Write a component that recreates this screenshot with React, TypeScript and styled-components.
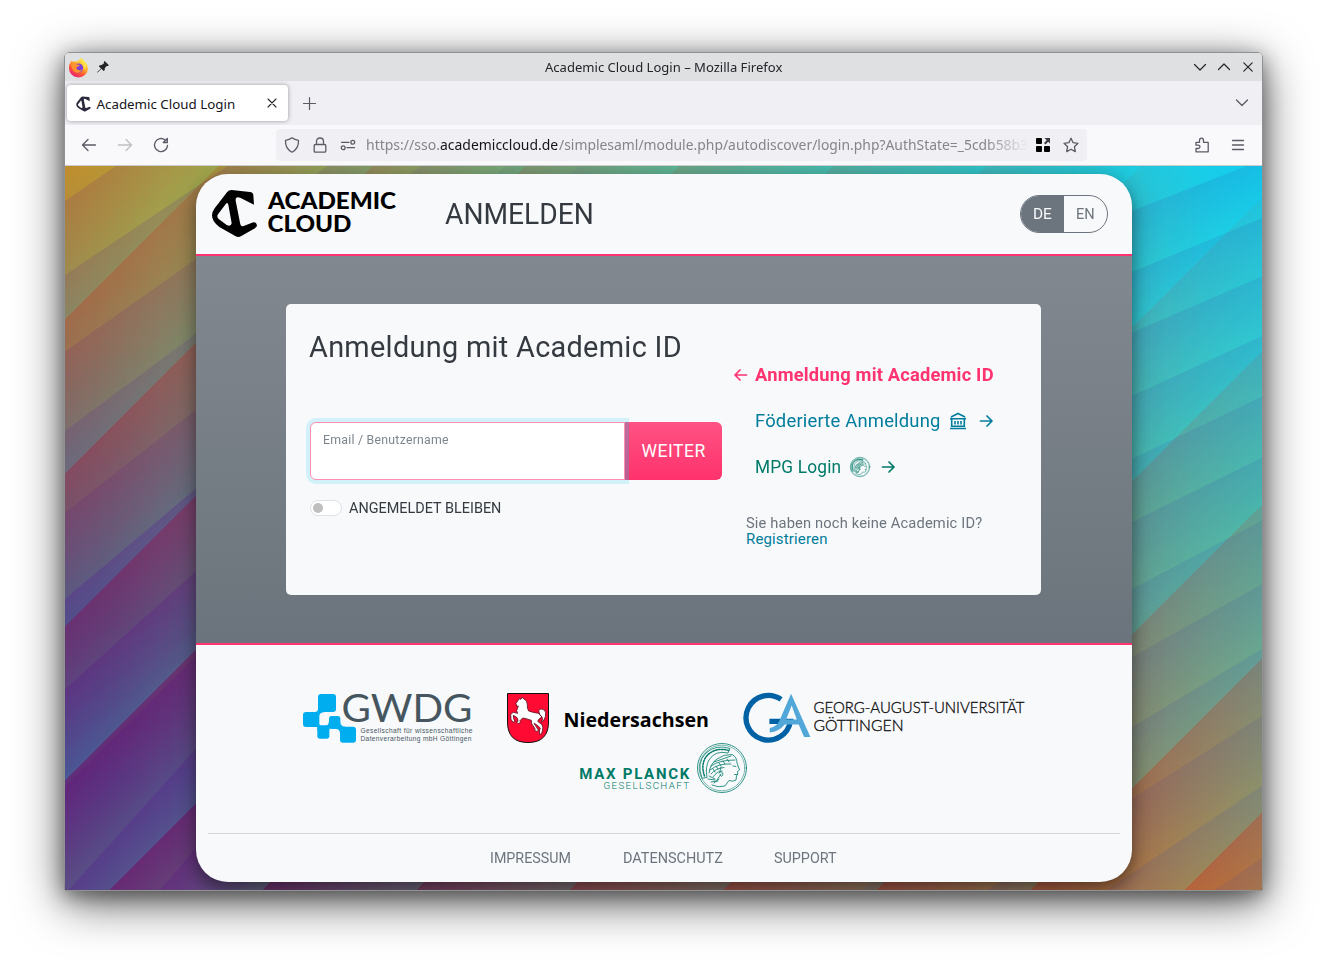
import React, { useLayoutEffect, useRef, useState } from "react";
import styled, { createGlobalStyle } from "styled-components";

const UI = `"Noto Sans", "Open Sans", sans-serif`;
const SITE = `Roboto, "Liberation Sans", sans-serif`;
const PINK = "#ff3370";
const TEAL = "#007d9c";
const GREEN = "#007a68";
const GREY = "#6c757d";
const INK = "#343a40";

const Global = createGlobalStyle`
  * { box-sizing: border-box; }
  body { margin: 0; background: #fff; font-family: ${SITE}; }
  svg { display: block; flex: none; overflow: visible; }
`;

/* A single line of text condensed or widened to a fixed measure. */
const Measure = styled.span`
  display: inline-block;
  flex: none;
  white-space: nowrap;
  text-align: left;
`;
const Stretch = styled.span`
  display: inline-block;
  transform-origin: 0 50%;
`;
function Fit({ w, children }: { w: number; children: React.ReactNode }) {
  const ref = useRef<HTMLSpanElement>(null);
  const [k, setK] = useState(1);
  useLayoutEffect(() => {
    if (ref.current) setK(w / ref.current.offsetWidth);
  }, [w]);
  return (
    <Measure style={{ width: w }}>
      <Stretch ref={ref} style={{ transform: `scaleX(${k})` }}>{children}</Stretch>
    </Measure>
  );
}

/* ---------- window frame ---------- */
const Desktop = styled.div`
  width: 1327px;
  height: 967px;
  padding: 52px 64px 76px;
  overflow: hidden;
  background: #fff;
`;
const Window = styled.div`
  width: 1199px;
  height: 839px;
  border: 1px solid #8f9193;
  border-radius: 5px 5px 0 0;
  overflow: hidden;
  display: flex;
  flex-direction: column;
  box-shadow: 0 12px 48px rgba(0, 0, 0, 0.62), 0 5px 20px rgba(0, 0, 0, 0.42);
`;
const TitleBar = styled.div`
  height: 28px;
  flex: none;
  display: grid;
  grid-template-columns: 1fr auto 1fr;
  align-items: center;
  background: #dee0e2;
  color: #232629;
  font: 13.33px/20px ${UI};
`;
const TitleLeft = styled.div`
  display: flex;
  align-items: center;
  gap: 7px;
  padding-left: 3px;
`;
const TitleRight = styled.div`
  display: flex;
  justify-content: flex-end;
  gap: 8px;
  padding-right: 6px;
`;
const TabStrip = styled.div`
  height: 44px;
  flex: none;
  display: flex;
  align-items: center;
  padding: 0 12px 0 2px;
  background: #f0eff4;
`;
const Tab = styled.div`
  width: 221px;
  height: 36px;
  margin-right: 13px;
  padding: 2px 8px 0 9px;
  display: flex;
  align-items: center;
  border-radius: 4px;
  background: #fff;
  box-shadow: 0 0 4px rgba(60, 60, 70, 0.5);
  color: #15141a;
  font: 13.33px/20px ${UI};
`;
const TabLabel = styled.div`
  flex: 1;
  padding-left: 5.5px;
`;
const Push = styled.div`
  flex: 1;
`;
const Toolbar = styled.div`
  height: 41px;
  flex: none;
  display: flex;
  align-items: center;
  padding: 0 16px;
  border-bottom: 1px solid #cccccf;
  background: #f9f9fb;
`;
const NavButtons = styled.div`
  width: 195px;
  display: flex;
  gap: 20px;
`;
const UrlBar = styled.div`
  width: 811px;
  height: 32px;
  padding: 0 8px;
  display: flex;
  align-items: center;
  border-radius: 4px;
  background: #f0f0f4;
`;
const UrlIcons = styled.div`
  display: flex;
  gap: 12px;
`;
const Url = styled.div`
  width: 663px;
  margin-left: 10px;
  margin-right: 6px;
  overflow: hidden;
  white-space: nowrap;
  color: #84848b;
  font: 14px/22px ${UI};
  mask-image: linear-gradient(to right, #000 0, #000 618px, transparent 663px);
`;
const Domain = styled.span`
  color: #15141a;
`;

/* ---------- page ---------- */
const Viewport = styled.div`
  height: 724px;
  display: grid;
  grid-template: 1fr / 1fr;
  overflow: hidden;
  > * { grid-area: 1 / 1; }
`;
const Card = styled.div`
  z-index: 1;
  width: 936px;
  height: 708px;
  margin: 8px 0 0 131px;
  display: flex;
  flex-direction: column;
  border-radius: 32px;
  overflow: hidden;
  background: #f8f9fb;
  box-shadow: 0 8px 16px rgba(0, 0, 0, 0.4), 0 2px 34px rgba(0, 0, 0, 0.15);
`;
const Header = styled.header`
  height: 82px;
  flex: none;
  padding: 0 24px 0 16px;
  display: flex;
  align-items: center;
  border-bottom: 2px solid ${PINK};
`;
const PageTitle = styled.div`
  flex: 1;
  margin-left: 48px;
  color: ${INK};
  font-size: 29.5px;
  line-height: 40px;
`;
const LangSwitch = styled.div`
  width: 88px;
  height: 38px;
  display: flex;
  border: 1px solid ${GREY};
  border-radius: 19px;
  overflow: hidden;
`;
const Lang = styled.div<{ $on?: boolean }>`
  flex: 1;
  display: flex;
  align-items: center;
  justify-content: center;
  background: ${(p) => (p.$on ? GREY : "transparent")};
  color: ${(p) => (p.$on ? "#f8f9fb" : GREY)};
  font-size: 15px;
`;
const Main = styled.main`
  height: 389px;
  flex: none;
  padding: 48px 91px 48px 90px;
  border-bottom: 2px solid ${PINK};
  background: linear-gradient(#82888f, #6b747c);
`;
const LoginBox = styled.section`
  height: 291px;
  padding-left: 23px;
  display: flex;
  border-radius: 5px;
  background: #f8f9fb;
`;
const FormSide = styled.div`
  width: 413px;
  padding-top: 23px;
`;
const FormTitle = styled.div`
  height: 95px;
  color: ${INK};
  font-size: 29.5px;
  line-height: 40px;
  letter-spacing: 0.01em;
`;
const InputGroup = styled.div`
  height: 58px;
  margin-left: 1px;
  display: flex;
`;
const Field = styled.div`
  z-index: 1;
  width: 315px;
  padding: 8px 12px;
  border: 1px solid #ff8db0;
  border-radius: 6px 0 0 6px;
  background: #fff;
  box-shadow: 0 0 0 4px rgba(3, 194, 238, 0.15);
  color: #7d858c;
  font-size: 12.5px;
  line-height: 18px;
  letter-spacing: 0.02em;
`;
const Submit = styled.div`
  width: 97px;
  display: flex;
  align-items: center;
  justify-content: center;
  border-radius: 0 6px 6px 0;
  background: linear-gradient(#ff5284, #ff326c);
  box-shadow: inset 4px 0 0 rgba(150, 130, 170, 0.33);
  color: #fff;
  font-size: 17.5px;
  letter-spacing: 0.03em;
`;
const Remember = styled.div`
  margin: 18px 0 0 1px;
  display: flex;
  align-items: center;
  gap: 7px;
  color: ${INK};
  font-size: 15px;
  line-height: 20px;
`;
const Toggle = styled.div`
  width: 32px;
  height: 16px;
  padding: 2px;
  border: 1px solid #dee2e6;
  border-radius: 8px;
  background: #fff;
`;
const Knob = styled.div`
  width: 10px;
  height: 10px;
  border-radius: 50%;
  background: #bfbfbf;
`;
const MethodSide = styled.div`
  padding: 48px 0 0 11px;
`;
const Method = styled.div<{ $color: string; $active?: boolean }>`
  height: 46px;
  padding-left: ${(p) => (p.$active ? 0 : 22)}px;
  display: flex;
  align-items: center;
  color: ${(p) => p.$color};
  font-size: 17.8px;
  font-weight: ${(p) => (p.$active ? 700 : 400)};
  letter-spacing: 0.01em;
  ${Measure} { padding-bottom: 2px; }
`;
const Gap = styled.span<{ $w: number }>`
  width: ${(p) => p.$w}px;
`;
const SignUp = styled.div`
  margin: 25px 0 0 13px;
  color: ${GREY};
  font-size: 15px;
  line-height: 16px;
  letter-spacing: 0.01em;
`;
const SignUpLink = styled.div`
  color: ${TEAL};
`;
const Footer = styled.footer`
  padding: 48px 12px 0;
`;
const LogoRow = styled.div<{ $offset: number }>`
  height: 50px;
  padding-left: ${(p) => p.$offset}px;
  display: flex;
`;
const FooterLinks = styled.nav`
  height: 49px;
  margin-top: 40px;
  padding-right: 1px;
  display: flex;
  align-items: center;
  justify-content: center;
  gap: 52px;
  border-top: 1px solid #d3d6da;
  color: ${GREY};
  font-size: 14.8px;
`;

/* ---------- striped background ---------- */
const LEFT_EDGES = [
  [201, 111], [275, 187], [351.5, 259], [431, 333.5], [512.7, 409.7],
  [599, 488.5], [689, 571], [786.7, 656], [894, 748.6], [1004, 847.5], [1120, 950],
];
const RIGHT_EDGES = [
  [211, 160], [272, 218], [332.5, 276.4], [395.8, 336], [458.7, 396.4], [522, 457.6], [589, 520.5],
  [657, 584], [727, 649], [798.5, 716], [873, 785.7], [947, 857.7], [1023, 930],
];
type FanProps = { edges: number[][]; xa: number; xb: number; from: number; to: number; id: string; tint: string; alpha: (i: number) => number };
function Fan({ edges, xa, xb, from, to, id, tint, alpha }: FanProps) {
  const at = (e: number[], x: number) => e[0] + ((e[1] - e[0]) / (xb - xa)) * (x - xa);
  return (
    <g mask={`url(#${id}Mask)`}>
      {edges.slice(0, -1).map((e, i) => {
        const n = edges[i + 1];
        const m = (e[1] - e[0]) / (xb - xa);
        const xm = (xa + xb) / 2;
        const d = (at(n, xm) - at(e, xm)) / (1 + m * m);
        return (
          <g key={i}>
            <linearGradient id={`${id}${i}`} gradientUnits="userSpaceOnUse" x1={xm} y1={at(e, xm)} x2={xm - m * d} y2={at(e, xm) + d}>
              <stop offset="0" stopColor={tint} stopOpacity={alpha(i)} />
              <stop offset="1" stopColor={tint} stopOpacity="0" />
            </linearGradient>
            <polygon
              fill={`url(#${id}${i})`}
              points={`${from},${at(e, from)} ${to},${at(e, to)} ${to},${at(n, to)} ${from},${at(n, from)}`}
            />
          </g>
        );
      })}
    </g>
  );
}
const AREA = { x: 65, y: 166, width: 1197, height: 724 };
const Stripes = () => (
  <svg width="1197" height="724" viewBox="65 166 1197 724">
    <defs>
      <linearGradient id="baseL" gradientUnits="userSpaceOnUse" x1="40" y1="166" x2="90" y2="890">
        <stop offset="0" stopColor="#b8a838" />
        <stop offset="0.21" stopColor="#8e8e60" />
        <stop offset="0.42" stopColor="#6e727c" />
        <stop offset="0.63" stopColor="#545c8a" />
        <stop offset="0.85" stopColor="#4a5896" />
        <stop offset="1" stopColor="#565a8c" />
      </linearGradient>
      <linearGradient id="baseR" gradientUnits="userSpaceOnUse" x1="1262" y1="166" x2="1180" y2="890">
        <stop offset="0" stopColor="#12d2f0" />
        <stop offset="0.25" stopColor="#30cad2" />
        <stop offset="0.47" stopColor="#4cbaac" />
        <stop offset="0.68" stopColor="#6ca890" />
        <stop offset="0.88" stopColor="#90946a" />
        <stop offset="1" stopColor="#a88850" />
      </linearGradient>
      <linearGradient id="across" x1="0" x2="1" y1="0" y2="0">
        <stop offset="0.02" stopColor="#000" />
        <stop offset="0.95" stopColor="#fff" />
      </linearGradient>
      <linearGradient id="leftHalf" x1="0" x2="1" y1="0" y2="0">
        <stop offset="0.25" stopColor="#fff" />
        <stop offset="0.5" stopColor="#000" />
      </linearGradient>
      <linearGradient id="rightHalf" x1="0" x2="1" y1="0" y2="0">
        <stop offset="0.5" stopColor="#000" />
        <stop offset="0.75" stopColor="#fff" />
      </linearGradient>
      <mask id="toRight"><rect {...AREA} fill="url(#across)" /></mask>
      <mask id="flMask" maskUnits="userSpaceOnUse" {...AREA}><rect {...AREA} fill="url(#leftHalf)" /></mask>
      <mask id="frMask" maskUnits="userSpaceOnUse" {...AREA}><rect {...AREA} fill="url(#rightHalf)" /></mask>
      <linearGradient id="diagRed" gradientUnits="userSpaceOnUse" x1="192.3" y1="192.3" x2="269.1" y2="269.1" spreadMethod="repeat">
        <stop offset="0" stopColor="#e61400" stopOpacity="0.32" />
        <stop offset="1" stopColor="#e61400" stopOpacity="0" />
      </linearGradient>
      <linearGradient id="diagPlum" gradientUnits="userSpaceOnUse" x1="192.3" y1="192.3" x2="269.1" y2="269.1" spreadMethod="repeat">
        <stop offset="0" stopColor="#7c0058" stopOpacity="0.48" />
        <stop offset="1" stopColor="#7c0058" stopOpacity="0" />
      </linearGradient>
      <linearGradient id="fade" gradientUnits="userSpaceOnUse" x1="1262" y1="200" x2="1000" y2="860">
        <stop offset="0" stopColor="#222" />
        <stop offset="0.5" stopColor="#777" />
        <stop offset="1" stopColor="#fff" />
      </linearGradient>
      <radialGradient id="cornerDark" gradientUnits="userSpaceOnUse" cx="160" cy="860" r="520">
        <stop offset="0.25" stopColor="#000" />
        <stop offset="1" stopColor="#000" stopOpacity="0" />
      </radialGradient>
      <radialGradient id="cornerLight" gradientUnits="userSpaceOnUse" cx="160" cy="860" r="520">
        <stop offset="0.25" stopColor="#fff" />
        <stop offset="1" stopColor="#000" />
      </radialGradient>
      <mask id="redMask">
        <rect {...AREA} fill="url(#fade)" />
        <rect {...AREA} fill="url(#cornerDark)" />
      </mask>
      <mask id="plumMask"><rect {...AREA} fill="url(#cornerLight)" /></mask>
    </defs>
    <rect {...AREA} fill="url(#baseL)" />
    <rect {...AREA} fill="url(#baseR)" mask="url(#toRight)" />
    <Fan edges={LEFT_EDGES} xa={65} xb={196} from={65} to={663} id="fl" tint="#5010a0" alpha={(i) => (i > 4 ? 0.24 : 0.14)} />
    <Fan edges={RIGHT_EDGES} xa={1132} xb={1262} from={663} to={1262} id="fr" tint="#2c50b8" alpha={() => 0.15} />
    <rect {...AREA} fill="url(#diagRed)" mask="url(#redMask)" />
    <rect {...AREA} fill="url(#diagPlum)" mask="url(#plumMask)" />
  </svg>
);

/* ---------- icons ---------- */
const line = (color: string, w = 1.3) => ({
  fill: "none", stroke: color, strokeWidth: w, strokeLinecap: "round" as const, strokeLinejoin: "round" as const,
});
const Chrome = ({ d, c = "#5b5b66", w = 1.3, size = 16 }: { d: string; c?: string; w?: number; size?: number }) => (
  <svg width={size} height={size} viewBox="0 0 16 16"><path d={d} {...line(c, w)} /></svg>
);
const FirefoxIcon = () => (
  <svg width="21" height="21" viewBox="0 0 21 21">
    <defs>
      <linearGradient id="ffBody" x1="0.8" y1="0.1" x2="0.25" y2="1">
        <stop offset="0" stopColor="#fff04a" />
        <stop offset="0.35" stopColor="#ffb02e" />
        <stop offset="0.65" stopColor="#ff5634" />
        <stop offset="1" stopColor="#e8187a" />
      </linearGradient>
    </defs>
    <path d="M13 1Q15 3 17 4.500Q20 8 20 11.500A9.500 9 0 0 1 1 11.500Q.8 7 3 4.500L3.800 3.200L4.800 5Q6.500 3.800 9 4.500Q11 3 13 1Z" fill="url(#ffBody)" />
    <circle cx="10.500" cy="11" r="4.600" fill="#7b3fd8" />
    <path d="M3 7Q6 5 9 7.500L12 8Q11 10 8.500 10Q8 12 10 13Q12 13.500 14 12.500Q12 16.500 8 15.500Q4 14 3 7Z" fill="#ff9330" />
    <path d="M13 1Q12 4 14 6.500Q17 9 15.500 13Q19 11 18 6.500Q15.500 4 13 1Z" fill="#ffe14c" />
  </svg>
);
const PinIcon = () => (
  <svg width="14" height="14" viewBox="0 0 14 14">
    <path d="M8.600 1L13 5.200L11.800 6L10.800 5.900L8.800 8.100L8.800 10L7.600 11L5.400 8.800L2 12.200L1 12.800L1.500 11.800L5 8.400L2.800 6.200L3.800 5.200L5.700 5.100L8 3.200L7.800 2Z" fill="#232629" />
  </svg>
);
const LogoPath = ({ fill = "#000" }: { fill?: string }) => (
  <path
    fill={fill}
    fillRule="evenodd"
    d="M107 60L162 66Q171 67 172 75L174 104L134 84Q118 77 119 92L133 163Q135 171 143 168L172 157Q182 157 183 168L177 175L136 198Q128 203 119 199L70 171Q48 155 48 136Q48 126 56 115L93 67Q98 60 107 60ZM91 100L66 133Q61 140 68 147L92 165Q105 171 107 160L97 104Q95 96 91 100Z"
  />
);
const Favicon = () => (
  <svg width="15" height="16" viewBox="46 58 140 145">
    <LogoPath fill="#2b2a3c" />
  </svg>
);
const UrlApps = () => (
  <svg width="16" height="16" viewBox="0 0 16 16">
    <g fill="#000">
      <rect x="1" y="1" width="6" height="6" rx="1" /><rect x="1" y="9" width="6" height="6" rx="1" /><rect x="9" y="9" width="6" height="6" rx="1" />
    </g>
    <path d="M9.500 1H15V6.500L13.200 4.700L10.500 7.400L9 5.900L11.700 3.200Z" fill="#3a3944" />
  </svg>
);
const Permissions = () => (
  <svg width="16" height="16" viewBox="0 0 16 16">
    <g {...line("#5b5b66", 1.3)}>
      <circle cx="12.800" cy="5.300" r="1.900" /><path d="M1.500 5.300H9" /><circle cx="3.200" cy="10.700" r="1.900" /><path d="M7 10.700H14.500" />
    </g>
  </svg>
);
const Arrow = ({ left, color }: { left?: boolean; color: string }) => (
  <svg width="14" height="14" viewBox="0 0 14 14">
    <path d={left ? "M13.500 7H2M7 2L2 7L7 12" : "M1.500 7H13M8 2L13 7L8 12"} {...line(color, 1.700)} />
  </svg>
);
const Bank = () => (
  <svg width="18" height="18" viewBox="0 0 18 18">
    <path d="M2.500 4.800L9 1.400L15.500 4.800" {...line(TEAL, 1.700)} />
    <path d="M1 6.800H17M2.700 7V15M15.300 7V15M1 16.500H17M2.700 14.300H15.300M6 9V12.500M9 9V12.500M12 9V12.500" {...line(TEAL, 1.600)} strokeLinecap="butt" />
  </svg>
);
const Medallion = ({ size, w = 1 }: { size: number; w?: number }) => (
  <svg width={size} height={size} viewBox="0 0 50 50">
    <g {...line(GREEN, 0.8 * w)}>
      <circle cx="25" cy="25" r="24.500" />
      <circle cx="25" cy="25" r="22.800" strokeWidth={0.5 * w} />
      <path d="M5 35Q-1 20 9 10Q19 1 33 5.500L31 10Q18 7 12 17Q8 24 10 34Z" />
      <path d="M7.500 33Q3 20 11 11.500Q20 4 31.500 7.500" strokeDasharray="1.500 1.400" strokeWidth={1.500 * w} />
      <path d="M12 30Q13 21 20 16Q27 11 35 11.500Q40 14 40 20L42.500 27L40.500 28.500L40.800 31L39.500 33L39 37Q36 39 32 37.500L28 43Q21 45 15 42" />
      <path d="M17 19L34 13M14 23Q22 17 38 17M13 27Q22 20 34 21M14 31Q19 25 27 24.500M16 34Q20 28 25 28M20 37L24 31M17 40L22 36" />
      <path d="M22 20l2 3M26 18l2 3M30 16l2 3M19 23l2 3M16 26l2 3M24 24l-1 4M22 30q3-3 4 1q-1 4-3 1M12 33l6 3M11 36l7 1M14 39l7-1M36 23l3 .5M37.500 31.500h2.500" />
    </g>
  </svg>
);

/* ---------- logos ---------- */
const AcademicLogo = () => (
  <svg width="185" height="48" viewBox="212 190 185 48">
    <g transform="translate(196 170) scale(.33333)"><LogoPath /></g>
    <g fontFamily="Lato" fontWeight="900" fontSize="23.500">
      <text x="268" y="209" textLength="128" lengthAdjust="spacingAndGlyphs">ACADEMIC</text>
      <text x="267.500" y="232.200" textLength="84" lengthAdjust="spacingAndGlyphs">CLOUD</text>
    </g>
  </svg>
);
const GwdgLogo = () => (
  <svg width="204" height="50" viewBox="303 693 204 50">
    <g transform="translate(290 680) scale(.33333)" fill="#00adef">
      <rect x="84" y="42" width="54" height="54" rx="9" />
      <rect x="39" y="96" width="48" height="45" rx="9" />
      <rect x="82" y="136" width="36" height="40" rx="7" />
      <rect x="117" y="108" width="34" height="38" rx="8" />
      <rect x="150" y="140" width="48" height="48" rx="9" />
      <path d="M74 96Q84 96 84 86H104V96Q88 97 88 108V132Q89 139 100 139Q117 139 117 122H130V136H151V122Q151 140 166 140V160H150Q150 148 138 146H118V152H82V141H74Z" />
    </g>
    <g fill="#45565f">
      <text x="341.500" y="721.500" fontFamily="Lato" fontSize="38.500" textLength="131" lengthAdjust="spacingAndGlyphs">GWDG</text>
      <g fontFamily="Liberation Sans" fontSize="6.600">
        <text x="360.500" y="733.100" textLength="112">Gesellschaft für wissenschaftliche</text>
        <text x="360.500" y="741" textLength="111">Datenverarbeitung mbH Göttingen</text>
      </g>
    </g>
  </svg>
);
const NiedersachsenLogo = () => (
  <svg width="236" height="50" viewBox="507 693 236 50">
    <path d="M507.500 693.500H548.500V722Q548.500 742.500 528 742.500Q507.500 742.500 507.500 722Z" fill="#ff0a32" stroke="#111" />
    <g transform="translate(490 680) scale(.33333)">
      <path
        d="M78 70L88 56L93 58L96 52L102 57Q112 62 112 74Q111 86 116 93Q130 98 146 100Q150 106 156 111Q147 104 147 96Q144 88 154 87Q166 88 167 98Q168 110 162 120L154 127Q160 116 156 111L148 116L143 124L156 134Q160 142 158 150L154 163L148 162L149 150L151 144L140 134L132 130L145 150L141 155L134 151L135 146L125 131L124 121L108 116L98 114L90 122L91 128L84 131L80 126L84 124L83 117L80 112L70 106L71 116L75 124L69 127L63 118L62 103L70 97L83 100L80 92L85 78L80 79Z"
        fill="#fff" stroke="#5a1020" strokeWidth="2.500" strokeLinejoin="round"
      />
    </g>
    <text x="563.500" y="726.800" fontFamily="Open Sans" fontWeight="700" fontSize="20" textLength="145.500" lengthAdjust="spacingAndGlyphs">Niedersachsen</text>
  </svg>
);
const GoettingenLogo = () => (
  <svg width="282" height="50" viewBox="743 693 282 50">
    <g transform="translate(730.400 680.400) scale(.33333)">
      <path d="M152 57A67 67 0 1 0 180 123H117" fill="none" stroke="#0062a5" strokeWidth="16" />
      <path d="M182 40L240 170H221L205 132H163Q145 154 118 156V143Q140 138 147 121ZM184 75L167 117H199Z" fill="#52a7d9" fillRule="evenodd" />
    </g>
    <g fontFamily="Lato" fontWeight="300" fontSize="15.800" fill="#111" stroke="#111" strokeWidth="0.35">
      <text x="813.500" y="712.500" textLength="211" lengthAdjust="spacingAndGlyphs">GEORG-AUGUST-UNIVERSITÄT</text>
      <text x="813.500" y="731.400" textLength="90" lengthAdjust="spacingAndGlyphs">GÖTTINGEN</text>
    </g>
  </svg>
);
const MaxPlanckText = () => (
  <svg width="118" height="50" viewBox="579 743 118 50">
    <g fontFamily="Roboto" fill={GREEN}>
      <text x="579.300" y="779.300" fontWeight="700" fontSize="15" textLength="110">MAX PLANCK</text>
      <text x="603.500" y="789" fontWeight="300" fontSize="9.800" textLength="85.500">GESELLSCHAFT</text>
    </g>
  </svg>
);

export default function App() {
  return (
    <Desktop>
      <Global />
      <Window>
        <TitleBar>
          <TitleLeft><FirefoxIcon /><PinIcon /></TitleLeft>
          <Fit w={237}>Academic Cloud Login – Mozilla Firefox</Fit>
          <TitleRight>
            <Chrome d="M2.500 5.500L8 11L13.500 5.500" c="#232629" w={1.200} />
            <Chrome d="M2.500 10.500L8 5L13.500 10.500" c="#232629" w={1.200} />
            <Chrome d="M3.800 3.800L12.200 12.200M12.200 3.800L3.800 12.200" c="#232629" w={1.200} />
          </TitleRight>
        </TitleBar>
        <TabStrip>
          <Tab>
            <Favicon />
            <TabLabel><Fit w={139}>Academic Cloud Login</Fit></TabLabel>
            <Chrome d="M4 3L12 11M12 3L4 11" c="#2b2a33" w={1.100} />
          </Tab>
          <Chrome d="M8.500 2.500V14.500M2.500 8.500H14.500" w={1.200} />
          <Push />
          <Chrome d="M2.500 5L8 10.500L13.500 5" w={1.300} />
        </TabStrip>
        <Toolbar>
          <NavButtons>
            <Chrome d="M14.500 8H1.500M7 2.500L1.500 8L7 13.500" />
            <Chrome d="M1.500 8H14.500M9 2.500L14.500 8L9 13.500" c="#bebec4" />
            <Chrome d="M14.500 8.500A6.500 6.500 0 1 1 12.300 3.200M14.300 1.500V5.500H10.300Z" w={1.400} />
          </NavButtons>
          <UrlBar>
            <UrlIcons>
              <Chrome d="M8 .8Q10.500 2.800 14.500 3.300Q15 11.500 8 15.200Q1 11.500 1.500 3.300Q5.500 2.800 8 .8Z" />
              <Chrome d="M3.500 7.500H12.500Q13.800 7.500 13.800 8.800V14Q13.800 15.200 12.500 15.200H3.500Q2.200 15.200 2.200 14V8.800Q2.200 7.500 3.500 7.500ZM4.500 7.500V4.500Q4.500 1 8 1Q11.500 1 11.500 4.500V7.500" />
              <Permissions />
            </UrlIcons>
            <Url>
              <Fit w={74}>https://sso.</Fit>
              <Domain><Fit w={118.500}>academiccloud.de</Fit></Domain>
              <Fit w={469.500}>/simplesaml/module.php/autodiscover/login.php?AuthState=_5cdb58b3</Fit>
            </Url>
            <UrlIcons>
              <UrlApps />
              <Chrome d="M8 1.200L10.100 5.700L15 6.300L11.400 9.700L12.300 14.600L8 12.200L3.700 14.600L4.600 9.700L1 6.300L5.900 5.700Z" />
            </UrlIcons>
          </UrlBar>
          <Push />
          <Chrome d="M2 5.300H5.500V3.500Q5.500 1.200 7.500 1.200Q9.500 1.200 9.500 3.500V5.300H14.200V14.800H2V11.500H4.200Q6 11.200 6 9.800Q6 8.200 4.200 8.200H2Z" />
          <Gap $w={20} />
          <Chrome d="M2.500 3.500H13.500M2.500 8H13.500M2.500 12.500H13.500" />
        </Toolbar>
        <Viewport>
          <Stripes />
          <Card>
            <Header>
              <AcademicLogo />
              <PageTitle><Fit w={149}>ANMELDEN</Fit></PageTitle>
              <LangSwitch>
                <Lang $on><Fit w={18.500}>DE</Fit></Lang>
                <Lang><Fit w={18.500}>EN</Fit></Lang>
              </LangSwitch>
            </Header>
            <Main>
              <LoginBox>
                <FormSide>
                  <FormTitle><Fit w={373}>Anmeldung mit Academic ID</Fit></FormTitle>
                  <InputGroup>
                    <Field><Fit w={126}>Email / Benutzername</Fit></Field>
                    <Submit><Fit w={64}>WEITER</Fit></Submit>
                  </InputGroup>
                  <Remember>
                    <Toggle><Knob /></Toggle>
                    <Fit w={152}>ANGEMELDET BLEIBEN</Fit>
                  </Remember>
                </FormSide>
                <MethodSide>
                  <Method $color={PINK} $active>
                    <Arrow left color={PINK} /><Gap $w={7.500} />
                    <Fit w={239}>Anmeldung mit Academic ID</Fit>
                  </Method>
                  <Method $color={TEAL}>
                    <Fit w={185.500}>Föderierte Anmeldung</Fit><Gap $w={8.500} />
                    <Bank /><Gap $w={12} /><Arrow color={TEAL} />
                  </Method>
                  <Method $color={GREEN}>
                    <Fit w={86.500}>MPG Login</Fit><Gap $w={8.500} />
                    <Medallion size={20} w={1.500} /><Gap $w={10.500} /><Arrow color={GREEN} />
                  </Method>
                  <SignUp>
                    <Fit w={236}>Sie haben noch keine Academic ID?</Fit>
                    <SignUpLink><Fit w={82}>Registrieren</Fit></SignUpLink>
                  </SignUp>
                </MethodSide>
              </LoginBox>
            </Main>
            <Footer>
              <LogoRow $offset={95}>
                <GwdgLogo /><NiedersachsenLogo /><GoettingenLogo />
              </LogoRow>
              <LogoRow $offset={371}>
                <MaxPlanckText /><Medallion size={50} />
              </LogoRow>
              <FooterLinks>
                <Fit w={81}>IMPRESSUM</Fit>
                <Fit w={99.500}>DATENSCHUTZ</Fit>
                <Fit w={63}>SUPPORT</Fit>
              </FooterLinks>
            </Footer>
          </Card>
        </Viewport>
      </Window>
    </Desktop>
  );
}
